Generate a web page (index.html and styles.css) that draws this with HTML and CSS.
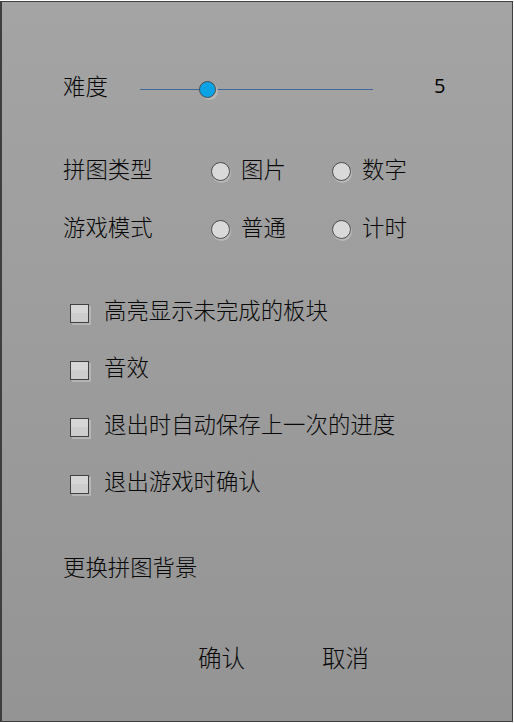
FILE: index.html
```html
<!DOCTYPE html>
<html lang="zh">
<head>
<meta charset="utf-8">
<link rel="stylesheet" href="styles.css">
</head>
<body>
<div class="frame">
  <div class="row row-difficulty">
    <span class="label txt">难度</span>
    <div class="slider">
      <div class="track"></div>
      <div class="thumb"></div>
    </div>
    <span class="value">5</span>
  </div>

  <div class="row row-radio first-radio">
    <span class="label label-wide txt">拼图类型</span>
    <label class="option"><span class="radio"></span><span class="txt">图片</span></label>
    <label class="option"><span class="radio"></span><span class="txt">数字</span></label>
  </div>

  <div class="row row-radio second-radio">
    <span class="label label-wide txt">游戏模式</span>
    <label class="option"><span class="radio"></span><span class="txt">普通</span></label>
    <label class="option"><span class="radio"></span><span class="txt">计时</span></label>
  </div>

  <div class="checks">
    <label class="row check"><span class="box"></span><span class="txt">高亮显示未完成的板块</span></label>
    <label class="row check"><span class="box"></span><span class="txt">音效</span></label>
    <label class="row check"><span class="box"></span><span class="txt">退出时自动保存上一次的进度</span></label>
    <label class="row check"><span class="box"></span><span class="txt">退出游戏时确认</span></label>
  </div>

  <div class="row row-bg">
    <span class="label txt">更换拼图背景</span>
  </div>

  <div class="row buttons">
    <span class="btn txt">确认</span>
    <span class="btn txt">取消</span>
  </div>
</div>
</body>
</html>
```
FILE: styles.css
```css
* { box-sizing: border-box; }
html, body {
  margin: 0;
  padding: 0;
  background: #ffffff;
}
body {
  font-family: "Noto Sans CJK SC", "Noto Sans", sans-serif;
  font-weight: 300;
  color: #080808;
  font-size: 22.4px;
}
.frame {
  margin-top: 1px;
  width: 513px;
  height: 721px;
  border: 1px solid #3e3e3e;
  border-left-width: 2px;
  background: linear-gradient(to bottom, #a4a4a4, #949494);
  padding: 71px 0 0 61px;
  display: flex;
  flex-direction: column;
}
.row {
  height: 30px;
  display: flex;
  align-items: center;
  line-height: 30px;
}
.txt {
  margin-bottom: 6px;
  white-space: nowrap;
}

.row-difficulty .label { width: 77px; }
.slider {
  position: relative;
  width: 233px;
  height: 30px;
}
.track {
  position: absolute;
  left: 0;
  right: 0;
  top: 16px;
  height: 1px;
  background: #40699a;
}
.thumb {
  position: absolute;
  left: 59px;
  top: 8px;
  width: 17px;
  height: 17px;
  border-radius: 50%;
  background: #0aa4e6;
  border: 1px solid #4a4a4a;
  box-shadow: 2px 2px 0 #b8b8b8;
}
.value {
  margin-left: 61px;
  margin-bottom: 4px;
  font-family: "Open Sans", "Liberation Sans", sans-serif;
  font-weight: 400;
  font-size: 20px;
  color: #000;
}

.first-radio { margin-top: 53px; }
.second-radio { margin-top: 28px; }
.label-wide { width: 148px; }
.option {
  width: 121px;
  display: flex;
  align-items: center;
}
.radio {
  width: 19px;
  height: 19px;
  border-radius: 50%;
  background: #d9d9d9;
  border: 1px solid #4c4c4c;
  box-shadow: 1px 2px 0 #b9b9b9;
  margin-right: 11px;
  flex: none;
}

.checks {
  margin-top: 53px;
  display: flex;
  flex-direction: column;
  gap: 27px;
  padding-left: 7px;
}
.check { gap: 15px; }
.box {
  width: 19px;
  height: 19px;
  border: 1px solid #404040;
  background: linear-gradient(to bottom, #d6d6d6 50%, #cdcdcd 50%);
  box-shadow: 2px 2px 0 #b5b5b5;
  flex: none;
  margin-top: 2px;
}

.row-bg { margin-top: 56px; }

.buttons {
  margin-top: 61px;
  padding-left: 135px;
  gap: 77px;
  font-size: 23.5px;
}
```
